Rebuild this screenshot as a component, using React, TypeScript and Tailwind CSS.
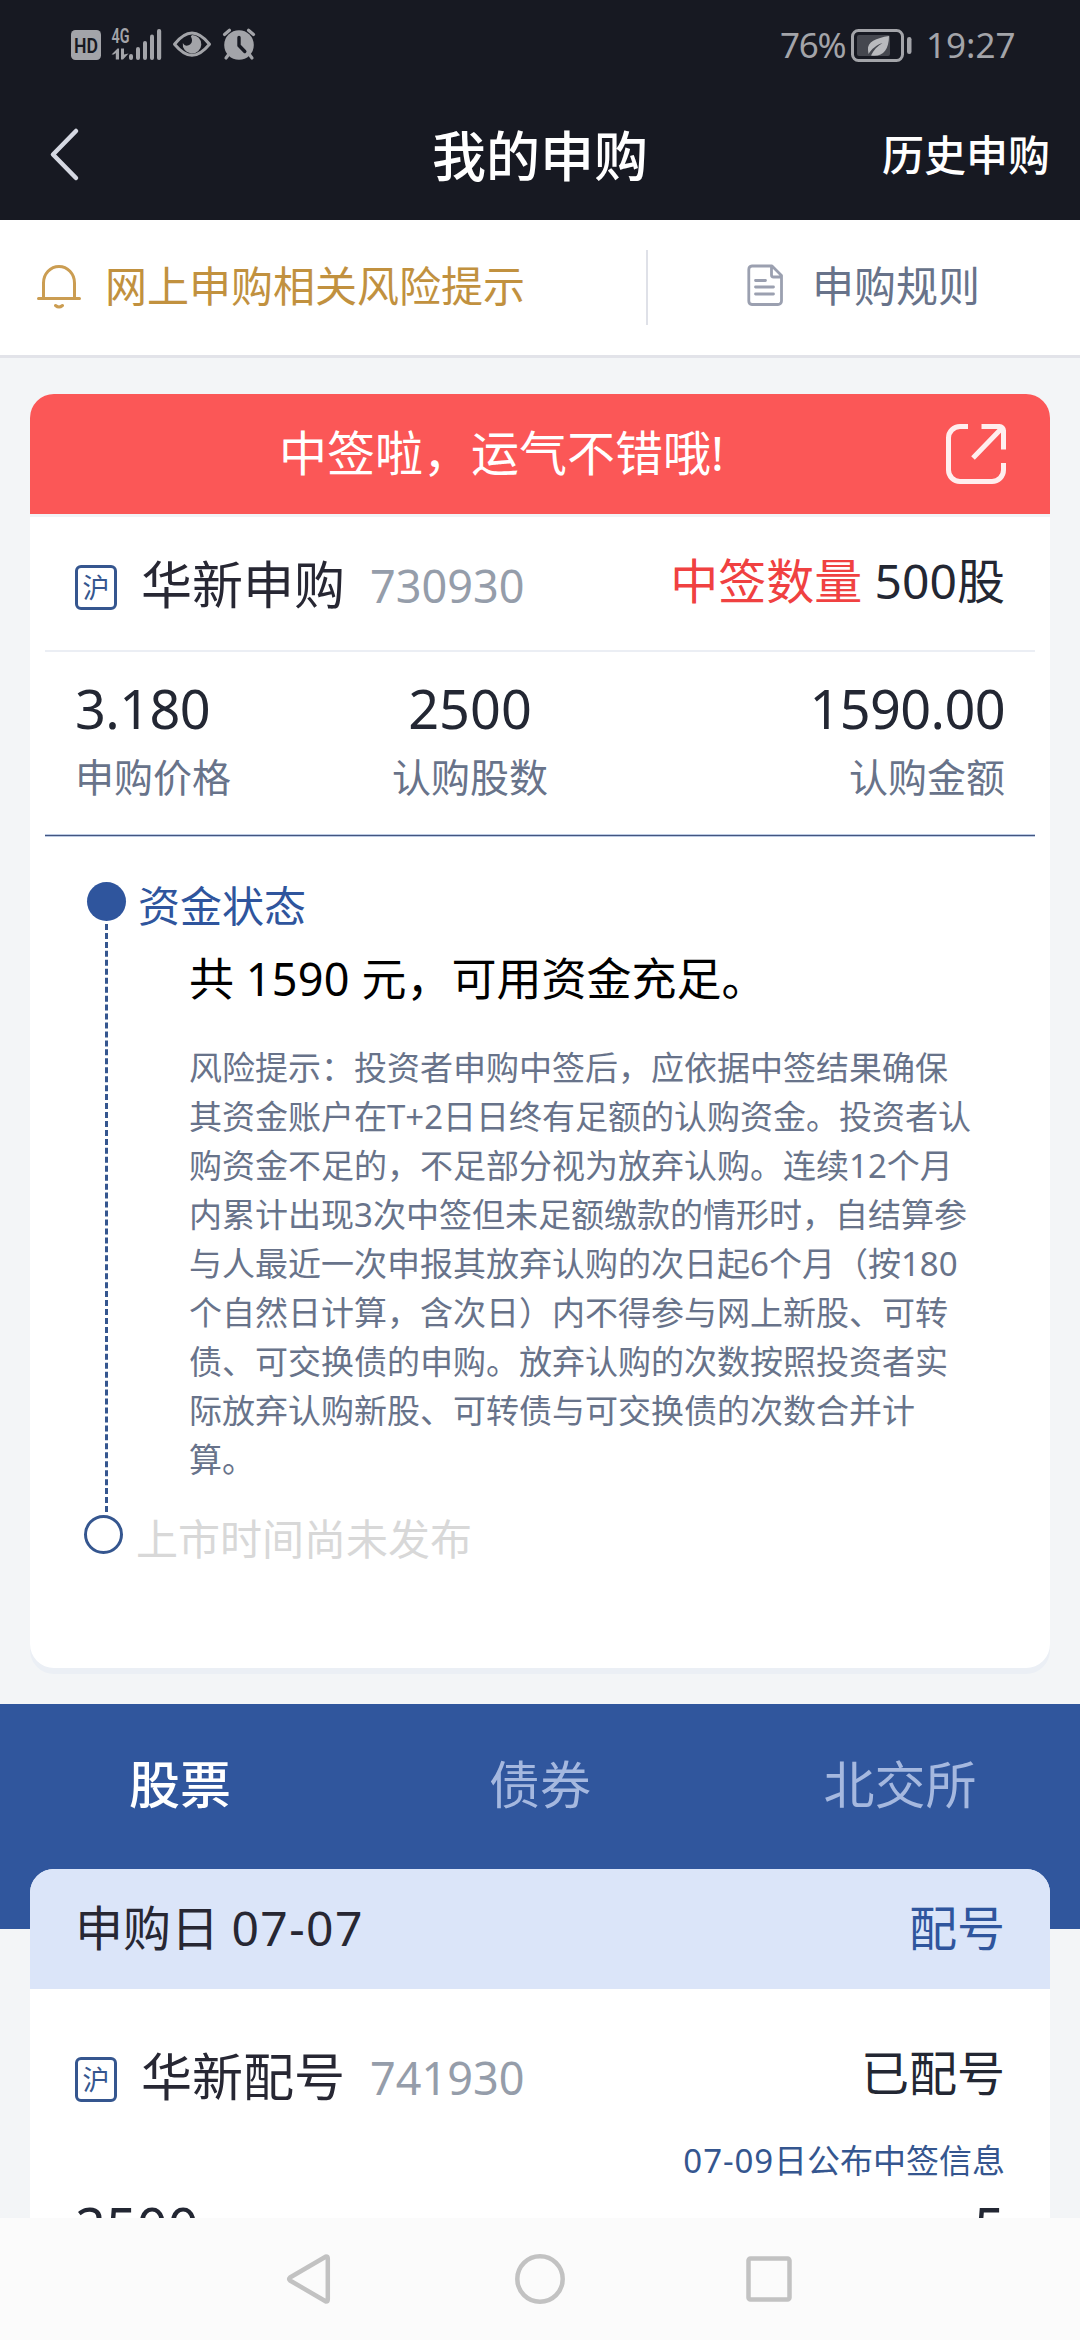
import React from 'react';

const REGULAR_FONT = "font-['Noto_Sans','Noto_Sans_CJK_SC',sans-serif]";

const RISK_LINES = [
  '风险提示：投资者申购中签后，应依据中签结果确保',
  '其资金账户在T+2日日终有足额的认购资金。投资者认',
  '购资金不足的，不足部分视为放弃认购。连续12个月',
  '内累计出现3次中签但未足额缴款的情形时，自结算参',
  '与人最近一次申报其放弃认购的次日起6个月（按180',
  '个自然日计算，含次日）内不得参与网上新股、可转',
  '债、可交换债的申购。放弃认购的次数按照投资者实',
  '际放弃认购新股、可转债与可交换债的次数合并计',
  '算。',
];

const TABS = ['股票', '债券', '北交所'];

function StatusIcons() {
  return (
    <svg className="ml-[70px] h-[40px] w-[190px]" viewBox="70 25 190 40" fill="#a3a4a9">
      {/* HD badge */}
      <rect x="71" y="30" width="30" height="30" rx="4.5" />
      <text x="86" y="52.5" textAnchor="middle" textLength="24" lengthAdjust="spacingAndGlyphs" fontSize="20" fontWeight="600" fill="#171922" fontFamily="Roboto, sans-serif">
        HD
      </text>
      <text x="111.5" y="43" textLength="18" lengthAdjust="spacingAndGlyphs" fontSize="19.5" fontWeight="600" fontFamily="Roboto, sans-serif">
        4G
      </text>
      {/* data arrows */}
      <path d="M111.5 54.5l6-6h1.5v11h-3.2v-6.500l-2 1.500zM121 48.500h3v6l4.500-1-5.500 6h-2z" />
      {/* signal */}
      <rect x="129" y="54" width="4" height="6" rx="2" />
      <rect x="136" y="47" width="4" height="13" rx="2" />
      <rect x="143" y="41" width="4" height="19" rx="2" />
      <rect x="150" y="34.5" width="4" height="25.5" rx="2" />
      <rect x="157" y="29" width="4.2" height="31" rx="2" />
      {/* eye */}
      <path d="M174.500 44.200C181 36 186 33 192 33s11 3 17.500 11.200C203 52 198 55.300 192 55.300S181 52 174.500 44.200z" fill="none" stroke="#a3a4a9" strokeWidth="3" strokeLinejoin="round" />
      <path d="M192 35a9.300 9.300 0 1 1-9.200 8c1 2 3 3 5 2.500 4-1 5.500-5 3-9z" />
      {/* alarm clock */}
      <circle cx="239" cy="45" r="14.8" />
      <path d="M224.500 34.500l5-4.300M253.500 34.500l-5-4.300M229 54l-3 4M249 54l3 4" stroke="#a3a4a9" strokeWidth="3.2" strokeLinecap="round" fill="none" />
      <path d="M239 37.500v8l5.800 6" stroke="#171922" strokeWidth="3.4" strokeLinecap="round" strokeLinejoin="round" fill="none" />
    </svg>
  );
}

function BatteryIcon() {
  return (
    <svg className="ml-[6px] h-[35px] w-[62px]" viewBox="850 27 62 35">
      <rect x="852.5" y="29.5" width="50" height="30" rx="6" fill="none" stroke="#a3a4a9" strokeWidth="3" />
      <rect x="857" y="34" width="33" height="21" rx="2" fill="#45474f" />
      <path d="M889 35c-13 2-22 6-21 14l.500 4c3-5 8-9 14-11-5 3-9 7-11.500 12.500 11 2 18-5 18-19.500z" fill="#b9babe" />
      <rect x="907" y="36" width="4.5" height="17" rx="2.2" fill="#a3a4a9" />
    </svg>
  );
}

function StatusBar() {
  return (
    <div className="flex h-[90px] items-center justify-between">
      <StatusIcons />
      <div className="mr-[67px] flex items-center text-[35px] leading-[40px] text-[#a3a4a9]">
        <span className="w-[64px] tracking-[-1.3px]">76%</span>
        <BatteryIcon />
        <span className="ml-[14px] w-[87px]">19:27</span>
      </div>
    </div>
  );
}

function TitleBar() {
  return (
    <div className="grid h-[130px] grid-cols-3 items-center text-white">
      <svg className="ml-[48px] h-[56px] w-[34px]" viewBox="0 0 34 56" fill="none" stroke="#d5d8e2" strokeWidth="4.5" strokeLinecap="round" strokeLinejoin="round">
        <path d="M28 4L5 27.500 28 51" />
      </svg>
      <div className="pt-[2px] text-center text-[54px] leading-[60px] font-medium">我的申购</div>
      <div className="pr-[30px] text-right text-[42px] leading-[60px] font-medium">历史申购</div>
    </div>
  );
}

function NoticeBar() {
  return (
    <div className="flex h-[138px] items-center border-b-[3px] border-[#e2e3e9] bg-white text-[42px] leading-[60px]">
      <div className="flex w-[646px] items-center">
        <svg className="mb-[3px] ml-[36px] h-[46px] w-[46px]" viewBox="0 0 46 46" fill="none" stroke="#cb9d52" strokeWidth="3" strokeLinecap="round">
          <path d="M2.500 35.500h41M7.500 35V20a15.500 16.500 0 0 1 31 0v15M19.500 42.500q3.500 3 7 0" />
        </svg>
        <span className="mb-[4px] ml-[23px] text-[#c1913f]">网上申购相关风险提示</span>
      </div>
      <div className="h-[75px] w-[2px] bg-[#dfe1e8]" />
      <div className="ml-[99px] flex items-center">
        <svg className="mb-[5px] h-[42px] w-[37px]" viewBox="0 0 37 42" fill="none" stroke="#9ba0b0" strokeWidth="2.8" strokeLinecap="round" strokeLinejoin="round">
          <path d="M5 2h20l9.500 9.500V37a3.500 3.500 0 0 1-3.500 3.500H5A3.500 3.500 0 0 1 1.800 37V5.500A3.500 3.500 0 0 1 5 2zM24.500 2.500v8.500a2 2 0 0 0 2 2h8M8.500 16.500h10M8.500 23h18M8.500 30h18" />
        </svg>
        <span className="mb-[4px] ml-[28px] text-[#68738a]">申购规则</span>
      </div>
    </div>
  );
}

function StockName({ name, code }: { name: string; code: string }) {
  return (
    <div className="flex h-[65px] items-center">
      <span className="mt-[8px] flex h-[45px] w-[42px] items-center justify-center rounded-[6px] border-[3px] border-[#35568f] text-[27px] leading-[36px] text-[#35568f]">
        沪
      </span>
      <span className="ml-[24px] text-[51px] leading-[60px] text-[#272733]">{name}</span>
      <span className="mt-[4px] ml-[25px] text-[45px] leading-[60px] text-[#959daa]">{code}</span>
    </div>
  );
}

function Timeline() {
  return (
    <div className="flex pt-[45px] pl-[54px]">
      <div className="w-[42px] shrink-0">
        <div className="ml-[3px] h-[39px] w-[39px] rounded-full bg-[#2f559d]" />
        <div className="mt-[3px] ml-[21px] h-[588px] border-l-[3px] border-dashed border-[#35568f]" />
        <div className="mt-[3px] h-[39px] w-[39px] rounded-full border-[3px] border-[#35568f]" />
      </div>
      <div className="pl-[10px]">
        <div className="mt-[-6px] ml-[2px] text-[42px] leading-[60px] text-[#2f559d]">资金状态</div>
        <div className="mt-[13px] ml-[53px] text-[45px] leading-[60px] text-black">
          共 <span className="tracking-[0.3px]">1590</span> 元，可用资金充足。
        </div>
        <div className="mt-[34px] ml-[53px] text-[33px] leading-[49px] whitespace-nowrap text-[#68738a]">
          {RISK_LINES.map((line) => (
            <p key={line}>{line}</p>
          ))}
        </div>
        <div className="mt-[25px] text-[42px] leading-[60px] text-[#d8d8d8]">上市时间尚未发布</div>
      </div>
    </div>
  );
}

function WinningCard() {
  return (
    <section className="mx-[30px] mt-[36px] h-[1274px] shrink-0 overflow-hidden rounded-[24px] bg-white shadow-[0_6px_0_#ebeff5]">
      <div className="flex h-[123px] items-center border-b-[3px] border-[#f1f3f6] bg-[#fb5757] text-white">
        <div className="w-[915px] pb-[2px] pl-[249px] text-[48px] leading-[60px]">中签啦，运气不错哦!</div>
        <svg className="h-[62px] w-[62px]" viewBox="0 0 62 62" fill="none" stroke="white" strokeOpacity="0.9" strokeWidth="5" strokeLinecap="butt" strokeLinejoin="round">
          <path d="M23 3.500H15A11.500 11.500 0 0 0 3.500 15v32A11.500 11.500 0 0 0 15 58.500h32A11.500 11.500 0 0 0 58.500 47V40M36.500 3.500h18a4 4 0 0 1 4 4v19M57 5L28 35" />
        </svg>
      </div>

      <div className="mx-[15px] flex h-[135px] items-start justify-between border-b-2 border-[#ebeef4] px-[30px] pt-[34px]">
        <StockName name="华新申购" code="730930" />
        <div className="text-[48px] leading-[60px] text-[#232733]">
          <span className="text-[#f04141]">中签数量</span> 500股
        </div>
      </div>

      <div className="mx-[15px] flex h-[182px] px-[30px] pt-[26px] text-[39px] leading-[60px] text-[#68738a]">
        <div className="w-[240px]">
          <div className="text-[54px] tracking-[-0.6px] text-[#232733]">3.180</div>
          <div className="mt-[9px]">申购价格</div>
        </div>
        <div className="w-[310px] text-center">
          <div className="text-[54px] text-[#232733]">2500</div>
          <div className="mt-[9px]">认购股数</div>
        </div>
        <div className="flex-1 text-right">
          <div className="text-[54px] tracking-[-0.6px] text-[#232733]">1590.00</div>
          <div className="mt-[9px]">认购金额</div>
        </div>
      </div>
      <div className="mx-[15px] h-[3px] border-y border-[#bccbe4] bg-[#44557f]" />

      <Timeline />
    </section>
  );
}

function AllotmentCard() {
  return (
    <section className="mx-[30px] mt-[-60px] h-[600px] overflow-hidden rounded-t-[24px] bg-white">
      <div className="flex h-[120px] items-center justify-between bg-[#dbe5f9] px-[45px] pb-[2px] text-[48px] leading-[60px]">
        <span className="text-[#272733]">
          申购日 <span className="tracking-[1.4px]">07-07</span>
        </span>
        <span className="text-[#2f559d]">配号</span>
      </div>
      <div className="flex items-start justify-between px-[45px] pt-[54px]">
        <StockName name="华新配号" code="741930" />
        <div className="text-[48px] leading-[60px] text-[#232733]">已配号</div>
      </div>
      <div className="mt-[28px] px-[45px] text-right text-[33px] leading-[50px] text-[#35568f]">
        <span className="tracking-[0.9px]">07-09</span>日公布中签信息
      </div>
      <div className="mt-[10px] flex justify-between px-[45px] text-[54px] leading-[60px] text-[#232733]">
        <span>2500</span>
        <span>5</span>
      </div>
    </section>
  );
}

function NavBar() {
  return (
    <nav className="flex h-[122px] shrink-0 items-center bg-[#fbfbfb]">
      <svg className="ml-[285px] h-[54px] w-[510px]" viewBox="285 2252 510 54" fill="none" stroke="#c2c2c2" strokeWidth="4.5" strokeLinejoin="round">
        <path d="M326 2256.500L290 2277.500q-1.500 1.500 0 3L326 2301.500q1.800 0 1.800-2v-41q0-2-1.800-2z" />
        <circle cx="540" cy="2279" r="22.7" />
        <rect x="748.5" y="2258.5" width="41" height="41" rx="2" />
      </svg>
    </nav>
  );
}

export default function App() {
  return (
    <div className={`flex h-[2340px] w-[1080px] flex-col overflow-hidden bg-[#f3f5f7] ${REGULAR_FONT}`} lang="zh-CN">
      <header className="shrink-0 bg-[#171922]">
        <StatusBar />
        <TitleBar />
      </header>
      <main className="flex min-h-0 flex-1 flex-col overflow-hidden">
        <div className="shrink-0">
          <NoticeBar />
        </div>
        <WinningCard />
        <div className="mt-[36px] grid h-[225px] shrink-0 grid-cols-3 bg-[#30569d] pt-[50px] text-center text-[51px] leading-[60px]">
          {TABS.map((tab, i) => (
            <div key={tab} className={i === 0 ? 'font-medium text-white' : 'text-[#a5b8df]'}>
              {tab}
            </div>
          ))}
        </div>
        <AllotmentCard />
      </main>
      <NavBar />
    </div>
  );
}
